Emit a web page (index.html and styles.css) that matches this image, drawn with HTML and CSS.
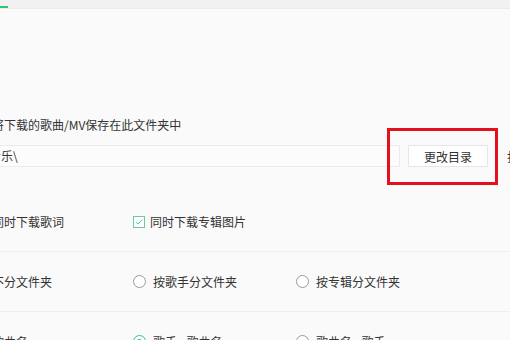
FILE: index.html
```html
<!DOCTYPE html>
<html lang="zh-CN">
<head>
<meta charset="utf-8">
<link rel="stylesheet" href="styles.css">
</head>
<body>
<div class="tabbar"><span class="tab-active"></span></div>
<div class="content">
  <section class="dir-section">
    <div class="dir-title">将下载的歌曲/MV保存在此文件夹中</div>
    <div class="dir-row">
      <div class="path-field">音乐\</div>
      <button class="btn">更改目录</button>
      <span class="link">打开文件夹</span>
    </div>
  </section>
  <div class="row first">
    <span class="cell label-col">同时下载歌词</span>
    <span class="cell opt"><span class="checkbox checked"><svg viewBox="0 0 10 10" width="8" height="8"><path d="M1.5 5.2 L4 7.6 L8.6 2.4" fill="none" stroke="#3bbf83" stroke-width="1.2"/></svg></span>同时下载专辑图片</span>
  </div>
  <div class="row">
    <span class="cell label-col">不分文件夹</span>
    <span class="cell opt"><span class="radio"></span>按歌手分文件夹</span>
    <span class="cell opt"><span class="radio"></span>按专辑分文件夹</span>
  </div>
  <div class="row">
    <span class="cell label-col">歌曲名</span>
    <span class="cell opt"><span class="radio checked"></span>歌手 - 歌曲名</span>
    <span class="cell opt"><span class="radio"></span>歌曲名 - 歌手</span>
  </div>
</div>
<div class="highlight-box"></div>
</body>
</html>
```
FILE: styles.css
```css
html, body {
  margin: 0;
  padding: 0;
}
body {
  width: 510px;
  height: 340px;
  overflow: hidden;
  background: #fafafa;
  font-family: "Noto Sans CJK SC", "Microsoft YaHei", sans-serif;
  font-size: 12px;
  color: #333;
  position: relative;
}
.tabbar {
  height: 8px;
  background: #f1f1f1;
  border-bottom: 1px solid #ebebeb;
  position: relative;
}
.tab-active {
  position: absolute;
  left: 0;
  bottom: 0;
  width: 8px;
  height: 2px;
  background: #31c27c;
}
.content {
  margin-left: -8px;
  width: 640px;
}
.dir-section {
  padding: 106px 0 24px;
}
.dir-title {
  line-height: 20px;
  height: 20px;
}
.dir-row {
  margin-top: 10px;
  display: flex;
  align-items: center;
  white-space: nowrap;
}
.dir-row > * {
  flex-shrink: 0;
}
.path-field {
  margin-left: -12px;
  width: 420px;
  height: 22px;
  line-height: 20px;
  box-sizing: border-box;
  padding-left: 8px;
  background: #fcfcfc;
  border: 1px solid #ebebeb;
}
.btn {
  margin-left: 8px;
  width: 80px;
  height: 22px;
  padding: 0;
  box-sizing: border-box;
  background: #fff;
  border: 1px solid #e6e6e6;
  font-family: inherit;
  font-size: 12px;
  color: #333;
}
.link {
  margin-left: 19px;
}
.row {
  display: flex;
  align-items: center;
  height: 60px;
  box-sizing: border-box;
  border-top: 1px solid #eeeeee;
  white-space: nowrap;
}
.row.first {
  border-top-color: transparent;
}
.cell {
  display: flex;
  align-items: center;
  flex-shrink: 0;
}
.label-col {
  width: 141px;
}
.opt {
  width: 163px;
}
.checkbox {
  width: 12px;
  height: 12px;
  box-sizing: border-box;
  border: 1px solid #6cc9a0;
  background: #fff;
  margin-right: 5px;
  display: flex;
  align-items: center;
  justify-content: center;
}
.radio {
  width: 13px;
  height: 13px;
  box-sizing: border-box;
  border: 1px solid #999;
  border-radius: 50%;
  background: #fff;
  margin-right: 7px;
  display: flex;
  align-items: center;
  justify-content: center;
}
.radio.checked {
  border-color: #31c27c;
}
.radio.checked::after {
  content: "";
  width: 5px;
  height: 5px;
  border-radius: 50%;
  background: #31c27c;
}
.highlight-box {
  position: absolute;
  left: 387px;
  top: 128px;
  width: 111px;
  height: 57px;
  box-sizing: border-box;
  border: 3px solid #e3101e;
}
```
